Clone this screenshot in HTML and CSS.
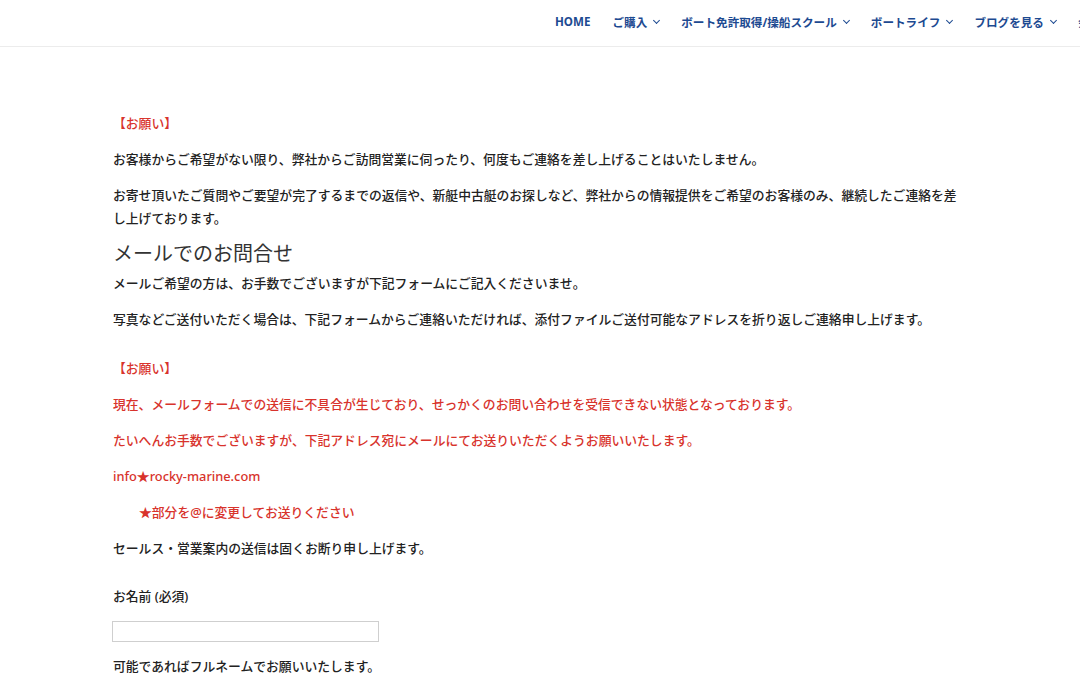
FILE: index.html
```html
<!DOCTYPE html>
<html lang="ja">
  <head>
    <meta charset="UTF-8" />
    <meta name="viewport" content="width=device-width, initial-scale=1.0" />
    <title>お問合せ</title>
    <link rel="stylesheet" href="styles.css">
  </head>
  <body>
    <header class="site-header">
      <nav class="main-nav">
        <a href="#" class="nav-item">HOME</a>
        <a href="#" class="nav-item">ご購入<span class="caret"></span></a>
        <a href="#" class="nav-item">ボート免許取得/操船スクール<span class="caret"></span></a>
        <a href="#" class="nav-item">ボートライフ<span class="caret"></span></a>
        <a href="#" class="nav-item">ブログを見る<span class="caret"></span></a>
        <a href="#" class="nav-item">会社案内<span class="caret"></span></a>
      </nav>
    </header>

    <main class="content">
      <p class="red">【お願い】</p>
      <p>お客様からご希望がない限り、弊社からご訪問営業に伺ったり、何度もご連絡を差し上げることはいたしません。</p>
      <p>お寄せ頂いたご質問やご要望が完了するまでの返信や、新艇中古艇のお探しなど、弊社からの情報提供をご希望のお客様のみ、継続したご連絡を差し上げております。</p>

      <h3>メールでのお問合せ</h3>
      <p>メールご希望の方は、お手数でございますが下記フォームにご記入くださいませ。</p>
      <p>写真などご送付いただく場合は、下記フォームからご連絡いただければ、添付ファイルご送付可能なアドレスを折り返しご連絡申し上げます。</p>

      <div class="notice">
        <p class="red">【お願い】</p>
        <p class="red">現在、メールフォームでの送信に不具合が生じており、せっかくのお問い合わせを受信できない状態となっております。</p>
        <p class="red">たいへんお手数でございますが、下記アドレス宛にメールにてお送りいただくようお願いいたします。</p>
        <p class="red">info★rocky-marine.com</p>
        <p class="red indent">★部分を@に変更してお送りください</p>
        <p>セールス・営業案内の送信は固くお断り申し上げます。</p>
      </div>

      <form class="contact-form">
        <p>お名前 (必須)</p>
        <input type="text" class="field" />
        <p>可能であればフルネームでお願いいたします。</p>
      </form>
    </main>
  </body>
</html>
```

FILE: styles.css
```css
body {
  margin: 0;
  background-color: #fff;
  font-family: "Noto Sans", "Noto Sans CJK JP", sans-serif;
  color: #222;
}
.site-header {
  height: 46px;
  border-bottom: 1px solid #ececec;
  overflow: hidden;
  white-space: nowrap;
}
.main-nav {
  display: flex;
  align-items: center;
  gap: 22px;
  height: 43px;
  padding-left: 555px;
}
.nav-item {
  display: flex;
  align-items: center;
  color: #1d4a91;
  font-size: 11.6px;
  font-weight: 700;
  text-decoration: none;
}
.caret {
  width: 4px;
  height: 4px;
  margin-left: 7px;
  margin-top: -3px;
  border-right: 1.3px solid #1d4a91;
  border-bottom: 1.3px solid #1d4a91;
  transform: rotate(45deg);
}
.content {
  width: 855px;
  padding: 65px 0 0 113px;
}
p {
  margin: 0 0 13px;
  font-size: 12.8px;
  line-height: 23px;
  font-weight: 500;
}
h3 {
  margin: 0 0 8px;
  font-size: 20px;
  line-height: 21px;
  font-weight: 400;
  color: #333;
}
.red {
  color: #d8332c;
}
.notice {
  padding-top: 13px;
}
.indent {
  padding-left: 26px;
}
.contact-form {
  padding-top: 12px;
}
.field {
  display: block;
  box-sizing: border-box;
  width: 267px;
  height: 21px;
  margin: 0 0 13px -1px;
  border: 1px solid #cfcfcf;
  padding: 0 4px;
}
```
